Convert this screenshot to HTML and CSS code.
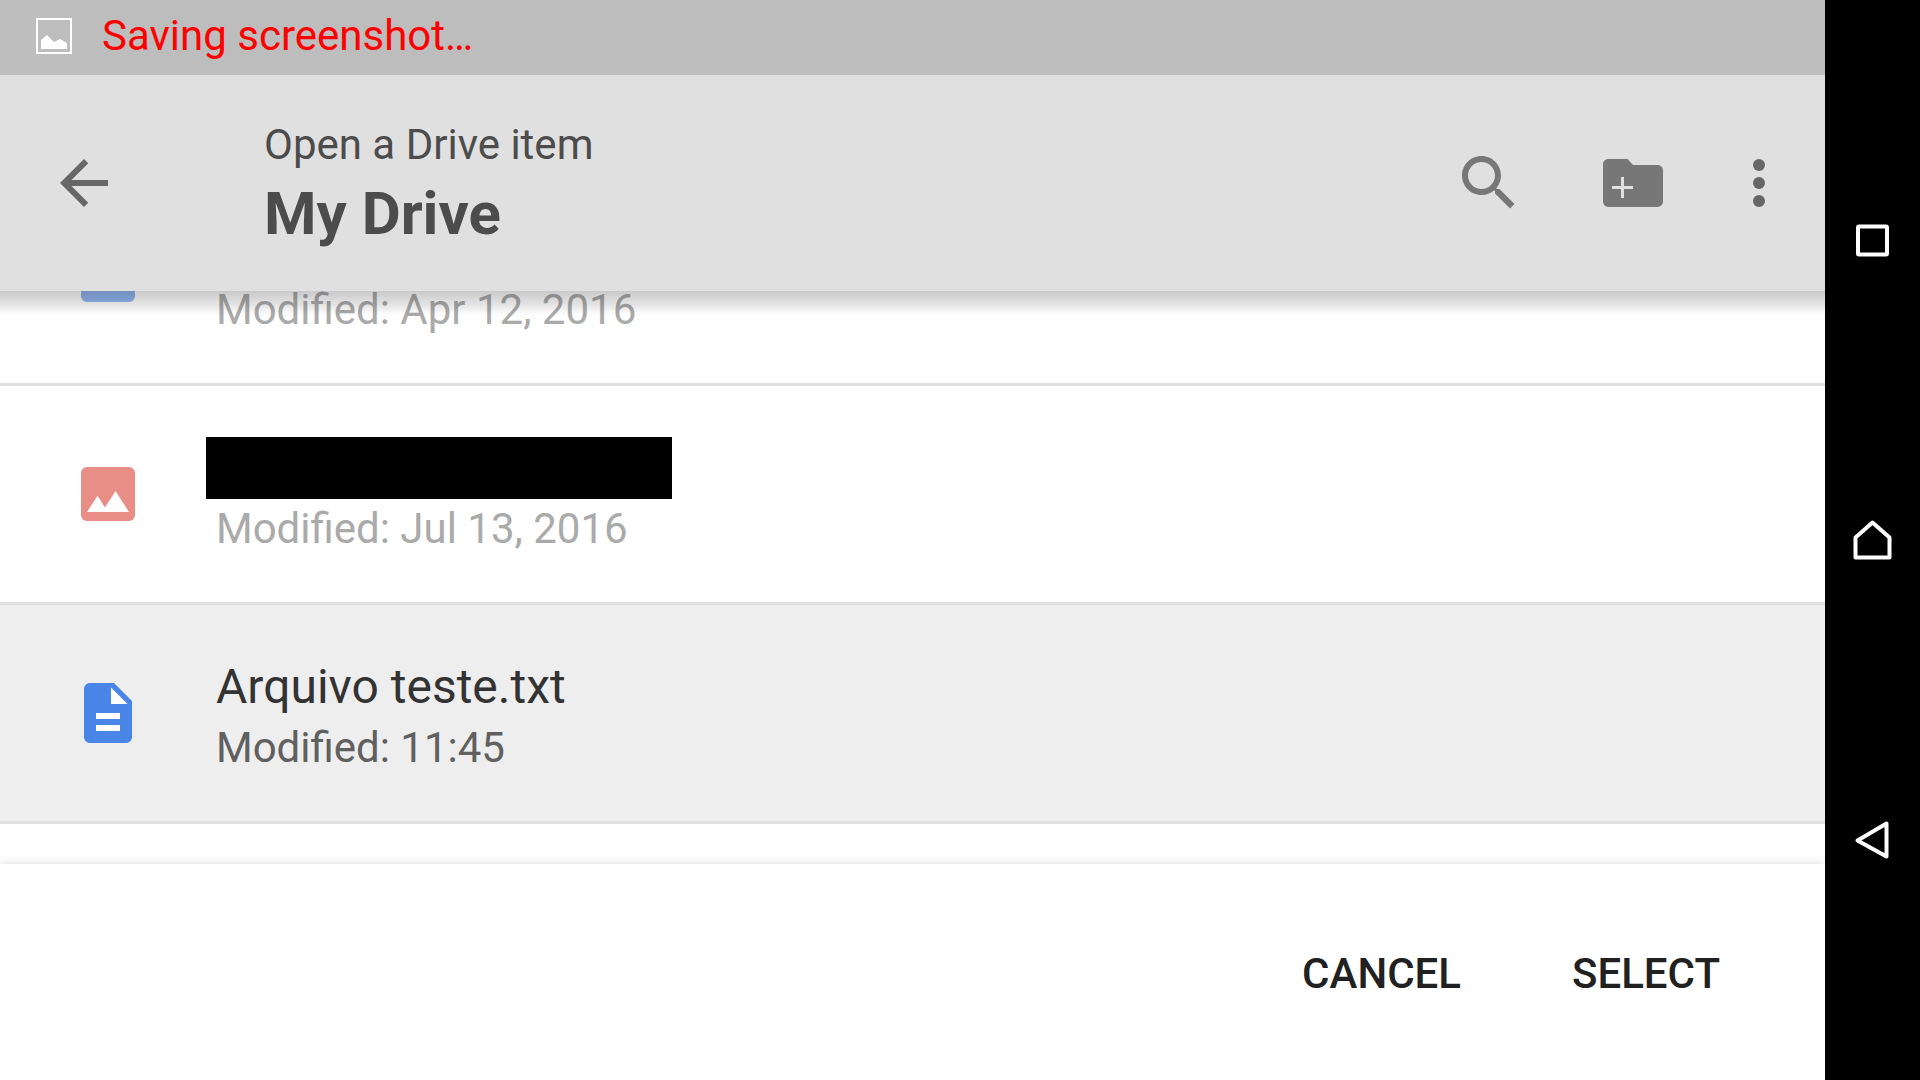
FILE: index.html
```html
<!DOCTYPE html>
<html lang="en">
<head>
<meta charset="utf-8">
<title>My Drive</title>
<link rel="stylesheet" href="styles.css">
</head>
<body>
<div class="screen">
  <div class="app">
    <div class="status">
      <svg class="status-icon" viewBox="0 0 36 36" aria-hidden="true"><rect x="1" y="1" width="34" height="34" fill="none" stroke="#fff" stroke-width="2"/><path fill="#fff" d="M5 31V22L11 17L18 24L24 21L31 25V31Z"/></svg>
      <span>Saving screenshot…</span>
    </div>
    <header class="toolbar">
      <button class="icon-button" aria-label="Back"><svg class="icon" viewBox="0 0 24 24"><path d="M20 11H7.83l5.59-5.59L12 4l-8 8 8 8 1.41-1.41L7.83 13H20z"/></svg></button>
      <div class="heading">
        <p class="prompt">Open a Drive item</p>
        <h1 class="folder">My Drive</h1>
      </div>
      <div class="actions">
        <button class="icon-button soft" aria-label="Search"><svg class="icon" viewBox="0 0 24 24"><path d="M15.5 14h-.79l-.28-.27C15.41 12.59 16 11.11 16 9.5 16 5.91 13.09 3 9.5 3S3 5.91 3 9.500 5.91 16 9.500 16c1.610 0 3.090-.59 4.230-1.570l.27.28v.79l5 4.990L20.490 19zm-6 0C7.010 14 5 11.990 5 9.500S7.010 5 9.500 5 14 7.010 14 9.500 11.990 14 9.500 14z"/></svg></button>
        <button class="icon-button soft" aria-label="New folder"><svg class="icon" viewBox="0 0 24 24"><path fill-rule="evenodd" d="M10.200 4H3.800C2.800 4 2 4.800 2 5.800V18.200C2 19.200 2.800 20 3.800 20H20.200C21.200 20 22 19.200 22 18.200V7.800C22 6.800 21.200 6 20.200 6H12ZM8 10H9V13H12V14H9V17H8V14H5V13H8Z"/></svg></button>
        <button class="icon-button" aria-label="More options"><svg class="icon" viewBox="0 0 24 24"><circle cx="12" cy="6" r="2"/><circle cx="12" cy="12" r="2"/><circle cx="12" cy="18" r="2"/></svg></button>
      </div>
    </header>
    <main class="viewport">
      <ul class="files">
        <li class="file disabled">
          <svg class="file-icon" viewBox="0 0 24 24" aria-hidden="true"><rect x="3" y="3" width="18" height="18" rx="2" fill="#4a86e8"/></svg>
          <div class="details"><div class="name"></div><div class="date">Modified: Apr 12, 2016</div></div>
        </li>
        <li class="file disabled">
          <svg class="file-icon" viewBox="0 0 24 24" aria-hidden="true"><rect x="3" y="3" width="18" height="18" rx="2" fill="#db4437"/><path fill="#fff" d="M5 18L8.500 12.600L11 16.500L14.500 11L19 18Z"/></svg>
          <div class="details"><div class="name"><span class="redacted"></span></div><div class="date">Modified: Jul 13, 2016</div></div>
        </li>
        <li class="file selected">
          <svg class="file-icon" viewBox="0 0 24 24" aria-hidden="true"><path fill="#4a86e8" d="M14 2H6C4.900 2 4 2.900 4 4V20C4 21.100 4.900 22 6 22H18C19.100 22 20 21.100 20 20V8Z"/><path fill="#fff" d="M13 3.500V9H18.500ZM8 12H16V14H8ZM8 16H16V18H8Z"/></svg>
          <div class="details"><div class="name">Arquivo teste.txt</div><div class="date">Modified: 11:45</div></div>
        </li>
      </ul>
    </main>
    <footer class="footer">
      <button class="text-button">CANCEL</button>
      <button class="text-button">SELECT</button>
    </footer>
  </div>
  <nav class="system" aria-label="System">
    <button class="key" aria-label="Recent apps"><svg class="key-icon" viewBox="0 0 48 48"><rect x="9" y="10.500" width="29" height="28" rx="1"/></svg></button>
    <button class="key" aria-label="Home"><svg class="key-icon" viewBox="0 0 48 48"><path d="M6.500 41.500V21.500L23.500 6.500L40.500 21.500V41.500Z"/></svg></button>
    <button class="key" aria-label="Back"><svg class="key-icon" viewBox="0 0 48 48"><path d="M8.500 24.500L37.500 7.500V40.500Z"/></svg></button>
  </nav>
</div>
</body>
</html>
```

FILE: styles.css
```css
* { box-sizing: border-box; }

body {
  margin: 0;
  font-family: Roboto, sans-serif;
  font-size: 42px;
  line-height: 52px;
  background: #fff;
}

button {
  margin: 0;
  padding: 0;
  border: 0;
  background: none;
  font: inherit;
  color: inherit;
  cursor: pointer;
}

svg { display: block; }

.screen {
  display: flex;
  height: 100vh;
}

.app {
  flex: 1;
  min-width: 0;
  display: flex;
  flex-direction: column;
}

.status {
  display: flex;
  align-items: center;
  gap: 30px;
  height: 75px;
  padding: 0 36px 4px;
  background: #bdbdbd;
  color: #f00;
}

.status-icon {
  width: 36px;
  height: 36px;
}

.toolbar {
  position: relative;
  z-index: 1;
  display: flex;
  align-items: center;
  height: 216px;
  padding: 0 30px 0 48px;
  background: #e0e0e0;
  color: #4c4c4c;
}

.toolbar::after {
  content: "";
  position: absolute;
  top: 100%;
  left: 0;
  right: 0;
  height: 26px;
  background: linear-gradient(rgba(0, 0, 0, .21), rgba(0, 0, 0, .1) 55%, rgba(0, 0, 0, .02) 85%, transparent);
  pointer-events: none;
}

.icon-button { color: #676767; }

.soft { color: #777; }

.icon {
  width: 72px;
  height: 72px;
  fill: currentColor;
}

.heading {
  flex: 1;
  padding: 10px 0 0 144px;
}

.prompt { margin: 0; }

.folder {
  margin: 0;
  font-size: 60px;
  font-weight: 700;
  line-height: 86px;
}

.actions {
  display: flex;
}

.actions .icon-button + .icon-button { margin-left: 72px; }

.actions .icon-button:last-child { margin-left: 54px; }

.viewport {
  flex: 1;
  min-height: 0;
  overflow: hidden;
}

/* The list is scrolled part of the way through its first row. */
.files {
  margin: -124px 0 0;
  padding: 0;
  list-style: none;
}

.file {
  display: flex;
  align-items: center;
  gap: 72px;
  height: 219px;
  padding: 0 72px;
  border-bottom: 3px solid #e0e0e0;
}

.file-icon {
  width: 72px;
  height: 72px;
}

.details { padding-top: 6px; }

.name {
  display: flow-root;
  height: 64px;
  font-size: 48px;
  line-height: 58px;
  color: #333;
}

.date { color: #606060; }

.disabled .file-icon { opacity: .6; }

.disabled .date { color: #aaa; }

.selected { background: #eee; }

.redacted {
  display: block;
  width: 466px;
  height: 62px;
  margin: -2px 0 0 -10px;
  background: #000;
}

.footer {
  position: relative;
  display: flex;
  align-items: center;
  justify-content: flex-end;
  gap: 111px;
  height: 216px;
  padding: 4px 105px 0;
  background: #fff;
  box-shadow: 0 0 10px rgba(0, 0, 0, .15);
  color: #212121;
}

.text-button { font-weight: 500; }

.system {
  position: relative;
  display: flex;
  flex-direction: column;
  width: 95px;
  padding: 90px 0;
  background: #000;
}

.key {
  flex: 1;
  display: flex;
  align-items: center;
  justify-content: center;
}

.key-icon {
  width: 48px;
  height: 48px;
  fill: none;
  stroke: #fff;
  stroke-width: 4;
  stroke-linejoin: round;
}
```
